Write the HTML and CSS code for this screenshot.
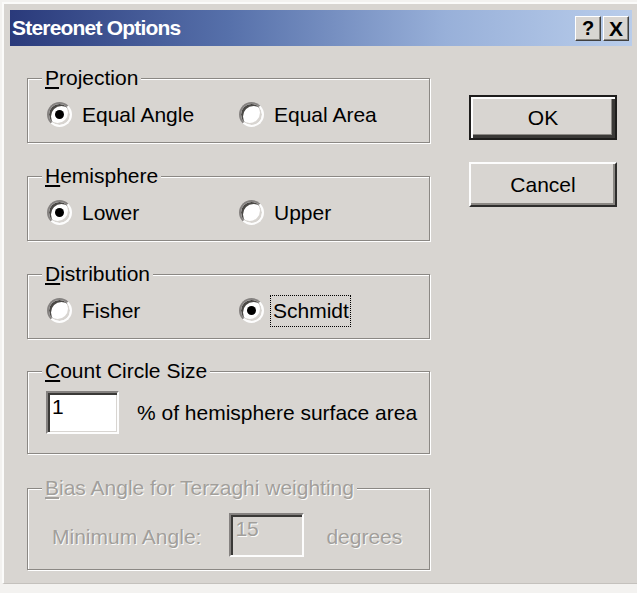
FILE: index.html
```html
<!DOCTYPE html>
<html lang="en">
<head>
<meta charset="utf-8">
<title>Stereonet Options</title>
<link rel="stylesheet" href="styles.css">
</head>
<body>
<div class="dialog">
  <div class="titlebar">
    <span class="title">Stereonet Options</span>
    <div class="caption-buttons">
      <span class="cap-btn">?</span>
      <span class="cap-btn cap-close">X</span>
    </div>
  </div>

  <div class="content">
    <div class="groups">
      <fieldset class="group g-projection">
        <legend><u>P</u>rojection</legend>
        <div class="opts">
          <label class="opt"><span class="radio checked"></span><span>Equal Angle</span></label>
          <label class="opt"><span class="radio"></span><span>Equal Area</span></label>
        </div>
      </fieldset>

      <fieldset class="group">
        <legend><u>H</u>emisphere</legend>
        <div class="opts">
          <label class="opt"><span class="radio checked"></span><span>Lower</span></label>
          <label class="opt"><span class="radio"></span><span>Upper</span></label>
        </div>
      </fieldset>

      <fieldset class="group">
        <legend><u>D</u>istribution</legend>
        <div class="opts">
          <label class="opt"><span class="radio"></span><span>Fisher</span></label>
          <label class="opt"><span class="radio checked"></span><span class="focus">Schmidt</span></label>
        </div>
      </fieldset>

      <fieldset class="group g-count">
        <legend><u>C</u>ount Circle Size</legend>
        <div class="field-row">
          <span class="edit">1</span>
          <span class="unit">% of hemisphere surface area</span>
        </div>
      </fieldset>

      <fieldset class="group g-bias disabled">
        <legend><u>B</u>ias Angle for Terzaghi weighting</legend>
        <div class="field-row bias-row">
          <span class="bias-label">Minimum Angle:</span>
          <span class="edit edit-disabled">15</span>
          <span class="unit">degrees</span>
        </div>
      </fieldset>
    </div>

    <div class="actions">
      <div class="btn btn-default"><span>OK</span></div>
      <div class="btn"><span>Cancel</span></div>
    </div>
  </div>
</div>
</body>
</html>
```

FILE: styles.css
```css
html, body {
  margin: 0;
  padding: 0;
  background: #f3f2f0;
  width: 637px;
  height: 593px;
  overflow: hidden;
}

body {
  font-family: "Liberation Sans", Arial, sans-serif;
  font-size: 21px;
  color: #000;
}

/* window frame */
.dialog {
  margin: 2px 0 0 2px;
  width: 636px;
  height: 582px;
  box-sizing: border-box;
  padding: 6px;
  background: #d8d5d1;
  border-top: 2px solid #fbfbfa;
  border-left: 2px solid #fbfbfa;
  border-bottom: 1px solid #c4c1bd;
}

/* caption */
.titlebar {
  height: 36px;
  width: 622px;
  display: flex;
  align-items: center;
  justify-content: space-between;
  background: linear-gradient(to right, #2a3a7b 0%, #5670aa 35%, #98b0d9 70%, #b9cdeb 100%);
}

.title {
  padding-left: 2px;
  color: #fff;
  font-weight: bold;
  font-size: 21px;
  letter-spacing: -0.8px;
}

.caption-buttons {
  display: flex;
  gap: 2px;
  padding-right: 3px;
}

.cap-btn {
  width: 26px;
  height: 25px;
  box-sizing: border-box;
  display: flex;
  align-items: center;
  justify-content: center;
  background: #d8d5d1;
  border: 1px solid;
  border-color: #fff #404040 #404040 #fff;
  box-shadow: inset -1px -1px 0 #8a8782;
  font-weight: bold;
  font-size: 20px;
  line-height: 1;
}

.cap-close {
  font-size: 21px;
}

/* dialog body */
.content {
  display: flex;
  padding: 20px 0 0 17px;
}

.groups {
  width: 403px;
  display: flex;
  flex-direction: column;
}

.actions {
  margin: 29px 0 0 39px;
  display: flex;
  flex-direction: column;
  gap: 22px;
}

/* etched group boxes */
.group {
  margin: 21px 0 0 0;
  padding: 12px 0 15px 0;
  border: 1px solid #8b8884;
  box-shadow: inset 1px 1px 0 #fff, 1px 1px 0 #fff;
  min-width: 0;
}

.g-projection {
  margin-top: 0;
}

.group legend {
  margin-left: 14px;
  padding: 0 3px;
  line-height: 24px;
  background: #d8d5d1;
}

.opts {
  display: grid;
  grid-template-columns: 192px 192px;
  padding-left: 19px;
}

.opt {
  display: flex;
  align-items: center;
  gap: 10px;
  line-height: 25px;
  height: 25px;
}

/* sunken round option button */
.radio {
  position: relative;
  width: 25px;
  height: 25px;
  box-sizing: border-box;
  border-radius: 50%;
  border: 2px solid;
  border-color: #858280 #fdfdfd #fdfdfd #858280;
  box-shadow: inset 2px 2px 0 #4a4845, inset -2px -2px 0 #d8d5d1;
  background: #fff;
  flex: none;
}

.radio.checked::after {
  content: "";
  position: absolute;
  left: 6px;
  top: 6px;
  width: 9px;
  height: 9px;
  border-radius: 50%;
  background: #000;
}

.focus {
  outline: 1px dotted #000;
  outline-offset: 0;
  padding: 3px 1px 3px 2px;
  margin-left: -3px;
  line-height: 24px;
}

/* edit fields */
.g-count {
  margin-top: 20px;
  padding: 8px 0 19px 0;
}

.field-row {
  display: flex;
  align-items: center;
  padding-left: 18px;
}

.edit {
  width: 73px;
  height: 43px;
  box-sizing: border-box;
  padding: 3px 4px;
  background: #fff;
  border: 2px solid;
  border-color: #858280 #fdfdfd #fdfdfd #858280;
  box-shadow: inset 2px 2px 0 #3a3937, inset -1px -1px 0 #d8d5d1;
  line-height: 22px;
  flex: none;
}

.field-row .unit {
  margin-left: 18px;
}

/* disabled group */
.g-bias {
  margin-top: 22px;
  padding: 13px 0 12px 0;
}

.disabled legend,
.disabled .bias-label,
.disabled .unit,
.edit-disabled {
  color: #a29f9b;
  text-shadow: 1px 1px 0 #fbfbfa;
}

.bias-row {
  padding-left: 24px;
}

.bias-row .bias-label {
  padding-top: 3px;
}

.edit-disabled {
  width: 75px;
  height: 44px;
  margin-left: 28px;
  background: #d8d5d1;
}

.bias-row .unit {
  margin-left: 22px;
  padding-top: 3px;
}

/* push buttons */
.btn {
  width: 148px;
  height: 45px;
  box-sizing: border-box;
  display: flex;
  align-items: center;
  justify-content: center;
  background: #d8d5d1;
  border: 2px solid;
  border-color: #fdfdfd #2e2d2c #2e2d2c #fdfdfd;
  box-shadow: inset -2px -2px 0 #8b8884;
}

.btn-default {
  border: 2px solid #1e1d1c;
  box-shadow: inset 2px 2px 0 #fdfdfd, inset -3px -3px 0 #3a3937, inset -4px -4px 0 #8b8884;
}
```
